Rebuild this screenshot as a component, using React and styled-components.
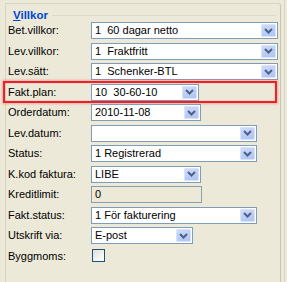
import React from "react";
import styled, { createGlobalStyle } from "styled-components";

const GlobalStyle = createGlobalStyle`
  html, body {
    margin: 0;
    padding: 0;
    background: #ECE9D8;
  }
  body {
    font-family: "Liberation Sans", Arial, sans-serif;
    font-size: 11px;
    color: #000;
  }
`;

const Window = styled.div`
  width: 287px;
  height: 282px;
  display: flex;
  background: #ECE9D8;
  overflow: hidden;
`;

const Panel = styled.div`
  margin: 3px 0 0 5px;
  width: 274px;
  border-top: 1px solid #D8D4C4;
  border-left: 1px solid #D8D4C4;
  border-right: 1px solid #C9C5B5;
  border-top-right-radius: 3px;
  display: flex;
  flex-direction: column;
`;

const Splitter = styled.div`
  margin-left: 3px;
  width: 1px;
  background: #DAD6C7;
`;

const Title = styled.div`
  margin: 5px 0 0 7px;
  height: 13px;
  line-height: 13px;
  font-weight: bold;
  font-size: 11.5px;
  color: #0046D5;
  display: flex;
  align-items: center;
  gap: 4px;

  u {
    text-decoration-thickness: 1px;
    text-underline-offset: 1px;
  }

  &::after {
    content: "";
    flex: 1;
    height: 1px;
    background: #DEDACB;
    margin-right: 4px;
  }
`;

const Form = styled.div`
  margin: 0 0 0 1px;
  display: grid;
  grid-template-columns: 84px 1fr;
  row-gap: 3.5px;
  align-items: center;
`;

const Label = styled.div`
  height: 17px;
  line-height: 17px;
  padding-left: 1px;
  white-space: nowrap;
`;

const Field = styled.div`
  position: relative;
  height: 17px;
  display: flex;
`;

const Combo = styled.div`
  box-sizing: border-box;
  width: ${({ $w }) => $w}px;
  height: 17px;
  border: 1px solid #7F9DB9;
  background: #FFFFFF;
  display: flex;
  align-items: center;
  padding: 1px;
`;

const Value = styled.span`
  flex: 1;
  padding-left: 2px;
  white-space: pre;
  overflow: hidden;
  line-height: 13px;
`;

const DropButton = styled.span`
  box-sizing: border-box;
  width: 15px;
  height: 13px;
  border: 1px solid #D9E3FB;
  border-radius: 1px;
  background: linear-gradient(160deg, #CFDCFB 0%, #B9CCF6 60%, #AFC4F3 100%);
  display: flex;
  align-items: center;
  justify-content: center;
`;

const TextBox = styled.div`
  box-sizing: border-box;
  width: ${({ $w }) => $w}px;
  height: 17px;
  border: 1px solid #8D9FAF;
  background: #ECE9D8;
  padding-left: 3px;
  line-height: 15px;
`;

const CheckBox = styled.div`
  box-sizing: border-box;
  margin: 1px 0 0 1px;
  width: 13px;
  height: 13px;
  border: 1px solid #1C5180;
  background: linear-gradient(135deg, #DCDCD7 0%, #F3F3F0 60%, #FFFFFF 100%);
`;

const Highlight = styled.div`
  position: absolute;
  left: -88px;
  top: -3px;
  width: 274px;
  height: 22px;
  box-sizing: border-box;
  border: 2px solid #E8232B;
  box-shadow: 0 0 2px 1px rgba(240, 90, 90, 0.45), inset 0 0 2px rgba(240, 90, 90, 0.45);
  pointer-events: none;
`;

const Chevron = () => (
  <svg width="9" height="6" viewBox="0 0 9 6">
    <path d="M1 1 L4.5 4.5 L8 1" fill="none" stroke="#4D6185" strokeWidth="2" />
  </svg>
);

const Select = ({ w, value }) => (
  <Combo $w={w}>
    <Value>{value}</Value>
    <DropButton>
      <Chevron />
    </DropButton>
  </Combo>
);

const rows = [
  { label: "Bet.villkor:", type: "select", w: 187, value: "1  60 dagar netto" },
  { label: "Lev.villkor:", type: "select", w: 187, value: "1  Fraktfritt" },
  { label: "Lev.sätt:", type: "select", w: 187, value: "1  Schenker-BTL" },
  { label: "Fakt.plan:", type: "select", w: 108, value: "10  30-60-10", marked: true },
  { label: "Orderdatum:", type: "select", w: 110, value: "2010-11-08" },
  { label: "Lev.datum:", type: "select", w: 166, value: "" },
  { label: "Status:", type: "select", w: 166, value: "1 Registrerad" },
  { label: "K.kod faktura:", type: "select", w: 110, value: "LIBE" },
  { label: "Kreditlimit:", type: "text", w: 111, value: "0" },
  { label: "Fakt.status:", type: "select", w: 166, value: "1 För fakturering" },
  { label: "Utskrift via:", type: "select", w: 102, value: "E-post" },
  { label: "Byggmoms:", type: "check" },
];

export default function App() {
  return (
    <>
      <GlobalStyle />
      <Window>
        <Panel>
          <Title>
            <span>
              <u>V</u>illkor
            </span>
          </Title>
          <Form>
            {rows.map((r) => (
              <React.Fragment key={r.label}>
                <Label>{r.label}</Label>
                <Field>
                  {r.type === "select" && <Select w={r.w} value={r.value} />}
                  {r.type === "text" && <TextBox $w={r.w}>{r.value}</TextBox>}
                  {r.type === "check" && <CheckBox />}
                  {r.marked && <Highlight />}
                </Field>
              </React.Fragment>
            ))}
          </Form>
        </Panel>
        <Splitter />
      </Window>
    </>
  );
}
